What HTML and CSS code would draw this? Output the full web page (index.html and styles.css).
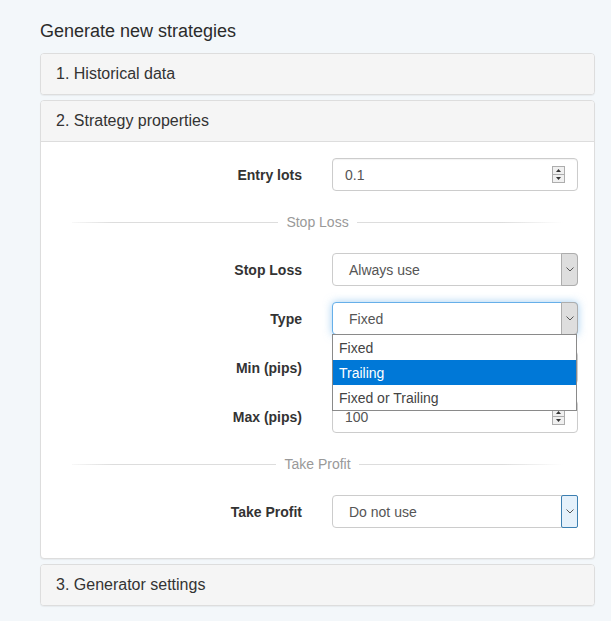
FILE: index.html
```html
<!DOCTYPE html>
<html lang="en">
<head>
  <meta charset="UTF-8" />
  <meta name="viewport" content="width=device-width, initial-scale=1.0" />
  <title>Generate new strategies</title>
  <link rel="stylesheet" href="styles.css">
</head>
<body>
  <div class="page">
    <h1 class="page-title">Generate new strategies</h1>

    <div class="panel">
      <div class="panel-heading">1. Historical data</div>
    </div>

    <div class="panel">
      <div class="panel-heading open">2. Strategy properties</div>
      <div class="panel-body">
        <div class="form-row">
          <label>Entry lots</label>
          <div class="input">
            <span class="value">0.1</span>
            <svg class="spinner" width="13" height="17" viewBox="0 0 13 17">
              <rect x="0.5" y="0.5" width="12" height="16" fill="#f0f0f0" stroke="#adadad"/>
              <line x1="1" y1="8.5" x2="12" y2="8.5" stroke="#adadad"/>
              <polygon points="4,6 9,6 6.5,3" fill="#333"/>
              <polygon points="4,11 9,11 6.5,14" fill="#333"/>
            </svg>
          </div>
        </div>

        <div class="divider"><span>Stop Loss</span></div>

        <div class="form-row">
          <label>Stop Loss</label>
          <div class="select">
            <span class="value">Always use</span>
            <span class="select-btn">
              <svg width="8" height="5" viewBox="0 0 8 5"><polyline points="0.5,0.5 4,4 7.5,0.5" fill="none" stroke="#555"/></svg>
            </span>
          </div>
        </div>

        <div class="form-row">
          <label>Type</label>
          <div class="select-wrap">
            <div class="select focused">
              <span class="value">Fixed</span>
              <span class="select-btn">
                <svg width="8" height="5" viewBox="0 0 8 5"><polyline points="0.5,0.5 4,4 7.5,0.5" fill="none" stroke="#555"/></svg>
              </span>
            </div>
            <ul class="dropdown">
              <li>Fixed</li>
              <li class="active">Trailing</li>
              <li>Fixed or Trailing</li>
            </ul>
          </div>
        </div>

        <div class="form-row">
          <label>Min (pips)</label>
          <div class="input">
            <span class="value"></span>
            <svg class="spinner" width="13" height="17" viewBox="0 0 13 17">
              <rect x="0.5" y="0.5" width="12" height="16" fill="#f0f0f0" stroke="#adadad"/>
              <line x1="1" y1="8.5" x2="12" y2="8.5" stroke="#adadad"/>
              <polygon points="4,6 9,6 6.5,3" fill="#333"/>
              <polygon points="4,11 9,11 6.5,14" fill="#333"/>
            </svg>
          </div>
        </div>

        <div class="form-row">
          <label>Max (pips)</label>
          <div class="input">
            <span class="value">100</span>
            <svg class="spinner" width="13" height="17" viewBox="0 0 13 17">
              <rect x="0.5" y="0.5" width="12" height="16" fill="#f0f0f0" stroke="#adadad"/>
              <line x1="1" y1="8.5" x2="12" y2="8.5" stroke="#adadad"/>
              <polygon points="4,6 9,6 6.5,3" fill="#333"/>
              <polygon points="4,11 9,11 6.5,14" fill="#333"/>
            </svg>
          </div>
        </div>

        <div class="divider"><span>Take Profit</span></div>

        <div class="form-row last">
          <label>Take Profit</label>
          <div class="select">
            <span class="value">Do not use</span>
            <span class="select-btn hover">
              <svg width="8" height="5" viewBox="0 0 8 5"><polyline points="0.5,0.5 4,4 7.5,0.5" fill="none" stroke="#555"/></svg>
            </span>
          </div>
        </div>
      </div>
    </div>

    <div class="panel">
      <div class="panel-heading">3. Generator settings</div>
    </div>
  </div>
</body>
</html>
```

FILE: styles.css
```css
body {
  margin: 0;
  background: #f3f7fa;
  font-family: "Liberation Sans", Arial, sans-serif;
  color: #333;
}
.page {
  width: 555px;
  padding: 21px 0 0 40px;
}
.page-title {
  margin: 0 0 12px;
  font-size: 18px;
  font-weight: normal;
  line-height: 20px;
  color: #2b2b2b;
}
.panel {
  background: #fff;
  border: 1px solid #ddd;
  border-radius: 4px;
  margin-bottom: 5px;
  box-shadow: 0 1px 1px rgba(0,0,0,0.05);
}
.panel-heading {
  height: 40px;
  display: flex;
  align-items: center;
  padding: 0 15px;
  background: #f5f5f5;
  border-radius: 3px;
  font-size: 16px;
}
.panel-heading.open {
  border-bottom: 1px solid #ddd;
  border-radius: 3px 3px 0 0;
}
.panel-body {
  padding: 16px 15px 30px;
}
.form-row {
  display: grid;
  grid-template-columns: 246px 246px;
  column-gap: 30px;
  align-items: center;
  margin-bottom: 16px;
}
.form-row.last {
  margin-bottom: 0;
}
.form-row label {
  text-align: right;
  font-weight: bold;
  font-size: 14px;
}
.input, .select {
  height: 33px;
  box-sizing: border-box;
  border: 1px solid #ccc;
  border-radius: 4px;
  background: #fff;
  display: flex;
  align-items: center;
  font-size: 14px;
  color: #555;
}
.input {
  padding: 0 12px;
  justify-content: space-between;
  box-shadow: inset 0 1px 1px rgba(0,0,0,0.05);
}
.select .value {
  flex: 1;
  padding-left: 16px;
}
.select-btn {
  width: 17px;
  align-self: stretch;
  margin: -1px -1px -1px 0;
  box-sizing: border-box;
  background: #dedede;
  border: 1px solid #adadad;
  border-radius: 0 4px 4px 0;
  display: flex;
  align-items: center;
  justify-content: center;
}
.select-btn.hover {
  background: #e5f1fb;
  border-color: #3c7fb1;
  border-radius: 2px;
}
.select.focused {
  border-color: #66afe9;
  box-shadow: 0 0 8px rgba(102,175,233,0.6);
}
.select-wrap {
  position: relative;
}
.dropdown {
  position: absolute;
  top: 32px;
  left: 0;
  width: 245px;
  box-sizing: border-box;
  margin: 0;
  padding: 0;
  list-style: none;
  background: #fff;
  border: 1px solid #8a8a8a;
  font-size: 14px;
  color: #444;
  z-index: 2;
}
.dropdown li {
  height: 25px;
  line-height: 26px;
  padding-left: 6px;
}
.dropdown li.active {
  background: #0078d7;
  color: #fff;
}
.divider {
  height: 30px;
  margin: 0 16px 16px;
  display: flex;
  align-items: center;
  font-size: 14px;
  color: #999;
}
.divider::before, .divider::after {
  content: "";
  flex: 1;
  height: 1px;
}
.divider::before {
  background: linear-gradient(to right, rgba(221,221,221,0.2), #ddd 20%);
}
.divider::after {
  background: linear-gradient(to right, #ddd, #ddd 70%, rgba(221,221,221,0));
}
.divider span {
  margin: 0 8px;
}
```
